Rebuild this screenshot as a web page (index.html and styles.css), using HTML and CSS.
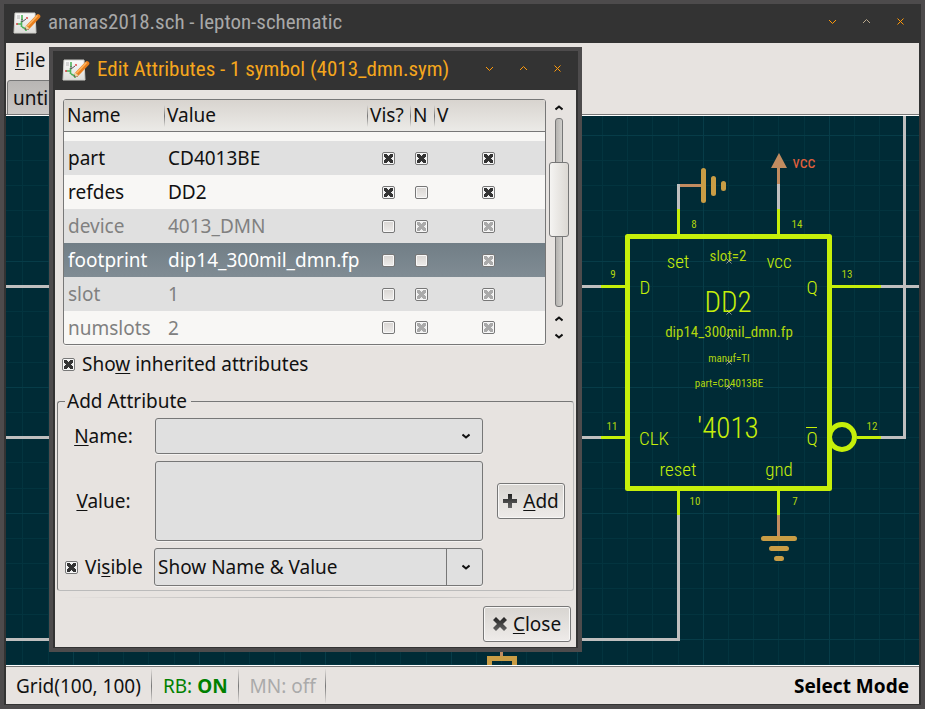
FILE: index.html
```html
<!DOCTYPE html>
<html lang="en">
<head>
<meta charset="utf-8">
<title>ananas2018.sch - lepton-schematic</title>
<link rel="stylesheet" href="styles.css">
</head>
<body>
<svg class="defs" aria-hidden="true">
  <defs>
    <linearGradient id="ink" x1="0" y1="0" x2="0" y2="1"><stop offset="0" stop-color="#222"/><stop offset="1" stop-color="#666"/></linearGradient>
    <linearGradient id="paper" x1="0" y1="0" x2="0" y2="1"><stop offset="0" stop-color="#fafafa"/><stop offset="1" stop-color="#dcdcd8"/></linearGradient>
  </defs>
  <symbol id="app" viewBox="0 0 28 24">
    <path d="M2 2h20l1 20H1z" fill="url(#paper)" stroke="#cfcfca"/>
    <path d="M4 5h3M4 7h3" stroke="#b4b4b4" fill="none"/>
    <path d="M9 4v5M8.500 10v6M4 13h4M9 16l4 2M13 16v4" stroke="#4fb35a" stroke-width="1.600" fill="none"/>
    <path d="M9 8v3M9 11l4-3M13 18h3" stroke="#555" fill="none"/>
    <circle cx="14" cy="7" r="1" fill="#d44"/><circle cx="4" cy="13" r="1" fill="#d44"/>
    <path d="M15 16L25 5.500" stroke="#e87f1e" stroke-width="4.600" stroke-linecap="round"/>
    <path d="M14.500 15L24.500 4.500" stroke="#ffb45e" stroke-width="1.600" fill="none"/>
    <path d="M11.500 19l1.700-4.600 3.400 3.200z" fill="#ecd2a4"/><path d="M11.500 19l0.800-2 1.200 1.200z" fill="#333"/>
  </symbol>
  <symbol id="min" viewBox="0 0 9 9"><path d="M1 3l3.500 3.500L8 3"/></symbol>
  <symbol id="max" viewBox="0 0 9 9"><path d="M1 6l3.500-3.500L8 6"/></symbol>
  <symbol id="x" viewBox="0 0 9 9"><path d="M1.500 1.500l6 6M7.500 1.500l-6 6"/></symbol>
  <symbol id="up" viewBox="0 0 8 6"><path d="M0.500 4.500L4 1.500l3.500 3" fill="none" stroke="#111" stroke-width="2"/></symbol>
  <symbol id="down" viewBox="0 0 8 6"><path d="M0.500 1.500L4 4.500l3.500-3" fill="none" stroke="#111" stroke-width="2"/></symbol>
</svg>

<div class="window main">
  <header class="titlebar">
    <svg class="app-icon"><use href="#app"/></svg>
    <h1 class="title">ananas2018.sch - lepton-schematic</h1>
    <button class="wm" aria-label="Minimize"><svg><use href="#min"/></svg></button>
    <button class="wm dim" aria-label="Maximize"><svg><use href="#max"/></svg></button>
    <button class="wm" aria-label="Close window"><svg><use href="#x"/></svg></button>
  </header>
  <div class="client">
    <nav class="menubar"><button class="menu"><u>F</u>ile</button></nav>
    <div class="tabs"><button class="tab">unti</button></div>
    <svg class="canvas" viewBox="6 116 913 549" preserveAspectRatio="xMinYMin slice">
      <defs>
        <pattern id="grid" x="73" y="9" width="126" height="126" patternUnits="userSpaceOnUse">
          <path d="M25 0h1v126h-1zM50 0h1v126h-1zM75 0h1v126h-1zM101 0h1v126h-1zM0 25h126v1H0zM0 50h126v1H0zM0 75h126v1H0zM0 101h126v1H0z" fill="#03343f"/>
          <path d="M0 0h1v126H0zM0 0h126v1H0z" fill="#073c48"/>
        </pattern>
        <path id="mark" d="M-2.500-2.500l5 5M2.500-2.500l-5 5"/>
      </defs>
      <rect x="6" y="116" width="913" height="549" fill="#002b36"/>
      <rect x="6" y="116" width="913" height="549" fill="url(#grid)"/>
      <g class="net">
        <path d="M6 286.500H601M6 437.500H601M881 286.500H919M881 437.500H904.500V116M678.500 515V639.500H6M678.500 184V209M778.500 184V209"/>
      </g>
      <g class="pin">
        <path d="M601 286.500H626M601 437.500H626M832 286.500H881M857 437.500H881M678.500 209V235M778.500 209V235M678.500 491V515M778.500 491V515"/>
      </g>
      <g class="body">
        <rect x="627.500" y="236.500" width="202" height="252"/>
        <circle cx="842" cy="437" r="12.500"/>
      </g>
      <path class="stub" d="M680 185.500H702M778.500 184V166M778.500 515V537M501.500 650V657"/>
      <path d="M779 153l8 15h-16z" fill="#c18c60"/>
      <path class="ground" d="M703.500 170.500V200.500M713.500 178.500V193.500M723.500 183.500V188.500M763.500 538.500H794.500M771.500 548.500H786.500M776.500 558.500H781.500"/>
      <path d="M487 665v-9h30v9h-5v-4h-20v4z" fill="#c99d45"/>
      <g class="marks">
        <use href="#mark" x="729" y="261"/><use href="#mark" x="729" y="312"/><use href="#mark" x="729" y="337"/><use href="#mark" x="729" y="362"/><use href="#mark" x="729" y="387"/>
      </g>
      <g class="t">
        <text class="t-l vcc" x="804" y="168">vcc</text>
        <g class="t-s">
          <text x="694" y="228">8</text><text x="797" y="228">14</text><text x="613" y="278">9</text><text x="847" y="278">13</text>
          <text x="612" y="430">11</text><text x="872" y="430">12</text><text x="695" y="505">10</text><text x="795" y="505">7</text>
        </g>
        <g class="t-l">
          <text x="678" y="268">set</text><text x="779" y="268">vcc</text><text x="645" y="294">D</text><text x="812" y="294">Q</text>
          <text x="654" y="445">CLK</text><text x="812" y="445">Q</text><text x="678" y="476">reset</text><text x="779" y="476">gnd</text>
        </g>
        <g class="t-m"><text x="728" y="261">slot=2</text><text x="729" y="337">dip14_300mil_dmn.fp</text></g>
        <g class="t-s"><text x="729" y="362">manuf=TI</text><text x="729" y="387">part=CD4013BE</text></g>
        <g class="t-xl"><text x="728" y="312">DD2</text><text x="728" y="438">'4013</text></g>
      </g>
      <path d="M806 427.500H817" stroke="#c6ef0a"/>
    </svg>
    <footer class="status">
      <span class="cell">Grid(100, 100)</span>
      <span class="cell on">RB: <b>ON</b></span>
      <span class="cell off">MN: off</span>
      <b class="mode">Select Mode</b>
    </footer>
  </div>
</div>

<section class="window dialog" role="dialog" aria-labelledby="dlg-title">
  <header class="titlebar">
    <svg class="app-icon"><use href="#app"/></svg>
    <h2 class="title" id="dlg-title">Edit Attributes - 1 symbol (4013_dmn.sym)</h2>
    <button class="wm" aria-label="Minimize dialog"><svg><use href="#min"/></svg></button>
    <button class="wm dim" aria-label="Maximize dialog"><svg><use href="#max"/></svg></button>
    <button class="wm" aria-label="Close dialog"><svg><use href="#x"/></svg></button>
  </header>
  <div class="client pane">
    <div class="list">
      <div class="frame">
        <table>
          <colgroup><col class="c-name"><col class="c-value"><col class="c-vis"><col class="c-n"><col></colgroup>
          <thead><tr><th>Name</th><th>Value</th><th>Vis?</th><th>N</th><th>V</th></tr></thead>
          <tbody>
            <tr class="cut"><td colspan="5"></td></tr>
            <tr class="alt"><td>part</td><td>CD4013BE</td><td><input type="checkbox" aria-label="part visible" checked></td><td><input type="checkbox" aria-label="part name" checked></td><td><input type="checkbox" aria-label="part value" checked></td></tr>
            <tr><td>refdes</td><td>DD2</td><td><input type="checkbox" aria-label="refdes visible" checked></td><td><input type="checkbox" aria-label="refdes name"></td><td><input type="checkbox" aria-label="refdes value" checked></td></tr>
            <tr class="alt inherited"><td>device</td><td>4013_DMN</td><td><input type="checkbox" aria-label="device visible" disabled></td><td><input type="checkbox" aria-label="device name" checked disabled></td><td><input type="checkbox" aria-label="device value" checked disabled></td></tr>
            <tr class="selected"><td>footprint</td><td>dip14_300mil_dmn.fp</td><td><input type="checkbox" aria-label="footprint visible"></td><td><input type="checkbox" aria-label="footprint name"></td><td><input type="checkbox" aria-label="footprint value" checked disabled></td></tr>
            <tr class="alt inherited"><td>slot</td><td>1</td><td><input type="checkbox" aria-label="slot visible" disabled></td><td><input type="checkbox" aria-label="slot name" checked disabled></td><td><input type="checkbox" aria-label="slot value" checked disabled></td></tr>
            <tr class="inherited"><td>numslots</td><td>2</td><td><input type="checkbox" aria-label="numslots visible" disabled></td><td><input type="checkbox" aria-label="numslots name" checked disabled></td><td><input type="checkbox" aria-label="numslots value" checked disabled></td></tr>
          </tbody>
        </table>
      </div>
      <div class="scrollbar">
        <button aria-label="Scroll up"><svg><use href="#up"/></svg></button>
        <div class="trough"><div class="thumb"></div></div>
        <button aria-label="Scroll up again"><svg><use href="#up"/></svg></button>
        <button aria-label="Scroll down"><svg><use href="#down"/></svg></button>
      </div>
    </div>
    <label class="check inherit"><input type="checkbox" checked><span>Sho<u>w</u> inherited attributes</span></label>
    <fieldset>
      <legend>Add Attribute</legend>
      <div class="form">
        <label class="lbl" for="name"><u>N</u>ame:</label>
        <div class="combo"><select id="name"><option></option></select><svg class="arrow"><use href="#down"/></svg></div>
        <label class="lbl" for="value"><u>V</u>alue:</label>
        <textarea id="value"></textarea>
        <button class="btn"><svg viewBox="0 0 14 14"><path d="M5 0h4v5h5v4H9v5H5V9H0V5h5z" fill="url(#ink)"/></svg><span><u>A</u>dd</span></button>
        <label class="check"><input type="checkbox" checked><span>Vi<u>s</u>ible</span></label>
        <div class="combo split"><select aria-label="Show"><option>Show Name &amp; Value</option></select><svg class="arrow"><use href="#down"/></svg></div>
      </div>
    </fieldset>
    <hr>
    <div class="actions"><button class="btn"><svg viewBox="0 0 14 14"><path d="M3 0l4 4 4-4 3 3-4 4 4 4-3 3-4-4-4 4-3-3 4-4-4-4z" fill="url(#ink)"/></svg><span><u>C</u>lose</span></button></div>
  </div>
</section>
</body>
</html>
```
FILE: styles.css
```css
* { box-sizing: border-box; }
body {
  margin: 0;
  height: 100vh;
  overflow: hidden;
  font: 19px/26px "Noto Sans", sans-serif;
  color: #111;
}
button, select, textarea { font: inherit; color: inherit; margin: 0; padding: 0; border: 0; background: none; }
u { text-underline-offset: 2px; text-decoration-thickness: 1px; }
.defs { position: absolute; width: 0; height: 0; }

/* window frames */
.window { display: flex; flex-direction: column; border: 4px solid #4d4b4c; background: #333; }
.main { height: 100vh; }
.dialog { position: absolute; left: 49px; top: 47px; width: 533px; }
.client { flex: 1; min-height: 0; display: flex; flex-direction: column; margin: 0 2px 1px; background: #e7e3e0; }
.titlebar { display: flex; align-items: center; height: 39px; padding: 0 16px 4px 9px; color: #a8a8a8; }
.app-icon { width: 28px; height: 24px; margin: 3px 7px 0 0; }
.title { flex: 1; margin: 0; font: 400 21px/26px "Roboto Condensed", Roboto, sans-serif; white-space: nowrap; }
.dialog .title { color: #f5a61d; }
.wm { width: 9px; height: 9px; margin-left: 25px; display: flex; }
.wm svg { width: 9px; height: 9px; }
.wm use { fill: none; stroke: #ff9a0a; stroke-width: 1; }
.main .dim use { stroke: #b9a88c; }

/* main window */
.menubar { height: 37px; padding: 4px 9px; }
.tabs { display: flex; height: 36px; padding-left: 1px; border-bottom: 1px solid #fff; box-shadow: inset 0 -1px #777; }
.tab { width: 120px; padding-left: 5px; text-align: left; border: 1px solid #777; border-radius: 3px 3px 0 0; background: linear-gradient(#b8b6b4, #cbc8c5); }
.canvas { flex: 1; min-height: 0; width: 100%; display: block; }
.net, .pin, .stub, .body, .ground, .marks { fill: none; stroke-width: 3; }
.net { stroke: #bfbfbf; }
.pin { stroke: #c6ef0a; }
.stub { stroke: #c18c60; }
.body { stroke: #c6ef0a; stroke-width: 5; stroke-linejoin: round; }
.ground { stroke: #c99d45; stroke-width: 5; stroke-linecap: round; }
.marks { stroke: #8e9494; stroke-width: 1; }
.t { font-family: "Roboto Condensed", Roboto, sans-serif; font-weight: 400; text-anchor: middle; fill: #b0d60e; }
.t-s { font-size: 11px; }
.t-m { font-size: 15px; }
.t-l { font-size: 19px; font-weight: 300; }
.t-xl { font-size: 29px; font-weight: 300; }
.t .t-l, .t .t-xl { fill: #c6ef0a; }
.t .vcc { font-size: 17px; font-weight: 400; fill: #e0603c; }
.status { display: flex; align-items: center; height: 39px; padding: 2px 10px 0; border-top: 1px solid #fff; box-shadow: inset 0 1px #777; }
.cell { padding-right: 10px; margin-right: 11px; line-height: 34px; border-right: 1px solid; border-image: linear-gradient(transparent, #777, transparent) 1; }
.on { color: #008000; }
.off { color: #aaa; padding-right: 9px; }
.mode { margin-left: auto; color: #000; }

/* attribute list */
.pane { padding: 9px 5px 5px 8px; }
.list { display: flex; gap: 3px; margin-right: 2px; }
.frame { flex: 1; border: 1px solid #777; border-radius: 3px; overflow: hidden; box-shadow: 0 1px #f5f3f1; }
table { width: 100%; table-layout: fixed; border-spacing: 0; background: #f8f7f5; }
.c-name { width: 101px; }
.c-value { width: 203px; }
.c-vis { width: 43px; }
.c-n { width: 24px; }
th, td { height: 34px; padding: 0 0 0 4px; text-align: left; font-weight: 400; white-space: nowrap; }
td:nth-child(2) { padding-left: 3px; }
thead { background: linear-gradient(#d8d4cf, #ecebe8); }
th { height: 32px; padding: 0 0 1px 2px; border-bottom: 1px solid #777; background: linear-gradient(transparent, #777, transparent) right / 1px 22px no-repeat; }
th:first-child { padding-left: 3px; }
th:last-child { background: none; }
td:nth-child(n+3) { padding: 0 3px 0 0; }
td input { display: block; margin: 0 auto; }
.cut td { height: 9px; }
tbody tr:last-child td { height: 33px; }
.alt { background: #e0e0e0; }
.inherited { color: #808080; }
.selected { color: #fff; background: linear-gradient(#717e86, #808c94); }
input[type=checkbox] {
  appearance: none; width: 13px; height: 13px;
  border: 1px solid #777; border-radius: 2px; background: linear-gradient(#d8d5d2, #eeecea); box-shadow: inset 0 0 0 1px #f8f8f8; color: #333;
}
.check input { margin: 0; }
input[type=checkbox]:disabled { color: #aaa; }
input[type=checkbox]:checked {
  background:
    linear-gradient(-45deg, transparent 38%, currentColor 38% 62%, transparent 62%) center / 9px 9px no-repeat,
    linear-gradient(45deg, transparent 38%, currentColor 38% 62%, transparent 62%) center / 9px 9px no-repeat,
    #eee;
}

.scrollbar { display: flex; flex-direction: column; align-items: center; width: 20px; padding-bottom: 1px; }
.scrollbar button { display: flex; align-items: center; justify-content: center; width: 20px; height: 17px; }
.scrollbar svg, .arrow { width: 8px; height: 6px; }
.trough { flex: 1; width: 8px; margin: 2px 0 3px; padding-top: 43px; border: 1px solid #777; border-radius: 3px; background: linear-gradient(90deg, #b5b3b0, #cfcdca); }
.thumb { width: 20px; height: 75px; margin-left: -7px; border: 1px solid #777; border-radius: 3px; background: linear-gradient(90deg, #f5f4f2, #dcd8d3); }

/* form */
.check { display: flex; align-items: center; gap: 7px; white-space: nowrap; }
.inherit { margin: 6px 0 11px -1px; }
fieldset { min-width: 0; margin: 0 -3px 0 -6px; padding: 4px 8px 4px 7px; border: 1px solid; border-color: #777 #bbb #bbb #777; border-radius: 3px; }
legend { padding: 0 4px 0 2px; }
.form { display: grid; grid-template-columns: 82px 1fr 68px; row-gap: 7px; align-items: center; }
.lbl { grid-column: 1; width: 76px; padding-left: 1px; text-align: center; }
.combo { display: grid; align-items: center; margin: 0 14px 0 8px; }
.combo select, textarea { width: 100%; height: 36px; padding: 0 3px; appearance: none; border: 1px solid #777; border-radius: 3px; background: #e0e0e0; box-shadow: 0 1px #f5f3f1; }
.combo select, .arrow { grid-area: 1 / 1; }
.arrow { justify-self: end; margin-right: 13px; pointer-events: none; }
.form textarea { width: auto; height: 80px; margin: 0 14px 0 8px; resize: none; }
.form .check { grid-column: 1; }
.btn { display: flex; align-items: center; justify-content: center; gap: 6px; height: 36px; border: 1px solid #777; border-radius: 3px; background: linear-gradient(#d8d5d1, #eeebe9); box-shadow: inset 0 0 0 1px #f8f7f6; }
.btn svg { width: 14px; height: 14px; }
.split { margin-left: 7px; }
.split select { height: 38px; }
.split::after { content: ""; grid-area: 1 / 1; justify-self: end; width: 36px; height: 38px; border-left: 1px solid #777; pointer-events: none; }
hr { width: 100%; height: 1px; margin: 6px 0 8px; border: 0; background: linear-gradient(90deg, transparent, #aaa, transparent); }
.actions { display: flex; justify-content: flex-end; }
.actions .btn { width: 88px; }
```
